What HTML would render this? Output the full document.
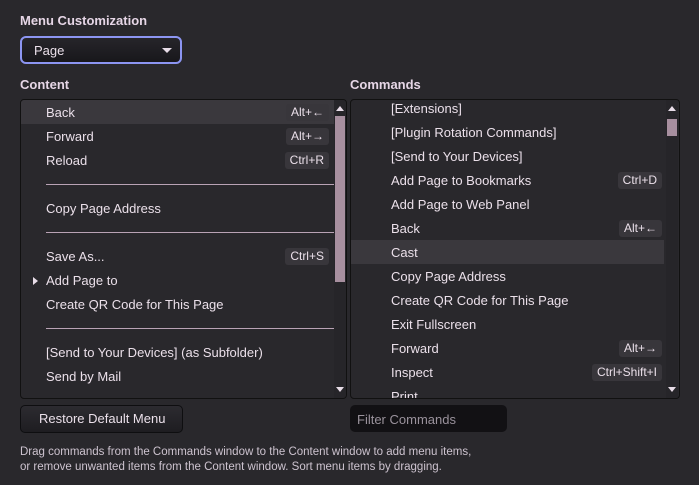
<!DOCTYPE html>
<html><head><style>
body{margin:0;width:699px;height:485px;background:#29282c;font-family:"Liberation Sans",sans-serif;color:#ebe0ea;font-size:13px;position:relative;overflow:hidden}
.a{position:absolute}
.h{font-weight:bold;font-size:13px;color:#e6d6e6}
.panel{position:absolute;border:1px solid #111;border-radius:4px;background:#29282c;overflow:hidden}
.row{position:absolute;left:0;height:24px;line-height:24px}
.row .t{position:absolute;left:25px;top:1px;white-space:nowrap}
.sc{position:absolute;right:5px;top:4px;height:17px;line-height:17px;padding:0 5px;background:#38363b;border-radius:3px;font-size:12px}
.sel{background:#3a383d}
.sep{position:absolute;left:25px;height:1px;background:#b9a3b5}
.sb{position:absolute;top:0;bottom:0;width:12px;background:#262529}
.thumb{position:absolute;left:1px;width:10px;background:#a78f9f}
.arr{position:absolute;left:2px;width:0;height:0;border-left:4px solid transparent;border-right:4px solid transparent}
.btn{position:absolute;border:1px solid #0e0e10;border-radius:5px;background:linear-gradient(#2c2b30,#1e1d21);height:26px;line-height:26px}
</style></head><body>
<div class="a h" style="left:20px;top:13px">Menu Customization</div>
<div class="a" style="left:20px;top:36px;width:158px;height:24px;border:2px solid #8c95f2;border-radius:6px;background:linear-gradient(#26252a,#18171b)">
<span class="a" style="left:12px;top:5px">Page</span>
<span class="a" style="right:8px;top:10px;border-left:5px solid transparent;border-right:5px solid transparent;border-top:5px solid #e8dde8;width:0;height:0"></span></div>
<div class="a h" style="left:20px;top:77px">Content</div>
<div class="a h" style="left:350px;top:77px">Commands</div>

<div class="panel" style="left:20px;top:99px;width:325px;height:298px">
<div class="row sel" style="top:0;width:313px"><span class="t">Back</span><span class="sc">Alt+←</span></div>
<div class="row" style="top:24px;width:313px"><span class="t">Forward</span><span class="sc">Alt+→</span></div>
<div class="row" style="top:48px;width:313px"><span class="t">Reload</span><span class="sc">Ctrl+R</span></div>
<div class="sep" style="top:84px;width:288px"></div>
<div class="row" style="top:96px;width:313px"><span class="t">Copy Page Address</span></div>
<div class="sep" style="top:132px;width:288px"></div>
<div class="row" style="top:144px;width:313px"><span class="t">Save As...</span><span class="sc">Ctrl+S</span></div>
<div class="row" style="top:168px;width:313px"><span class="a" style="left:12px;top:9px;border-top:4px solid transparent;border-bottom:4px solid transparent;border-left:5px solid #e8dde8;width:0;height:0"></span><span class="t">Add Page to</span></div>
<div class="row" style="top:192px;width:313px"><span class="t">Create QR Code for This Page</span></div>
<div class="sep" style="top:228px;width:288px"></div>
<div class="row" style="top:240px;width:313px"><span class="t">[Send to Your Devices] (as Subfolder)</span></div>
<div class="row" style="top:264px;width:313px"><span class="t">Send by Mail</span></div>
<div class="sb" style="left:313px"><span class="arr" style="top:6px;border-bottom:5px solid #e8dde8"></span><div class="thumb" style="top:16px;height:166px"></div><span class="arr" style="bottom:6px;border-top:5px solid #e8dde8"></span></div>
</div>

<div class="panel" style="left:350px;top:99px;width:328px;height:298px">
<div class="row" style="top:-4px;width:316px"><span class="t" style="left:40px">[Extensions]</span></div>
<div class="row" style="top:20px;width:316px"><span class="t" style="left:40px">[Plugin Rotation Commands]</span></div>
<div class="row" style="top:44px;width:316px"><span class="t" style="left:40px">[Send to Your Devices]</span></div>
<div class="row" style="top:68px;width:316px"><span class="t" style="left:40px">Add Page to Bookmarks</span><span class="sc">Ctrl+D</span></div>
<div class="row" style="top:92px;width:316px"><span class="t" style="left:40px">Add Page to Web Panel</span></div>
<div class="row" style="top:116px;width:316px"><span class="t" style="left:40px">Back</span><span class="sc">Alt+←</span></div>
<div class="row sel" style="top:140px;width:313px"><span class="t" style="left:40px">Cast</span></div>
<div class="row" style="top:164px;width:316px"><span class="t" style="left:40px">Copy Page Address</span></div>
<div class="row" style="top:188px;width:316px"><span class="t" style="left:40px">Create QR Code for This Page</span></div>
<div class="row" style="top:212px;width:316px"><span class="t" style="left:40px">Exit Fullscreen</span></div>
<div class="row" style="top:236px;width:316px"><span class="t" style="left:40px">Forward</span><span class="sc">Alt+→</span></div>
<div class="row" style="top:260px;width:316px"><span class="t" style="left:40px">Inspect</span><span class="sc">Ctrl+Shift+I</span></div>
<div class="row" style="top:284px;width:316px"><span class="t" style="left:40px">Print</span></div>
<div class="sb" style="left:315px"><span class="arr" style="top:6px;border-bottom:5px solid #e8dde8"></span><div class="thumb" style="top:19px;height:17px"></div><span class="arr" style="bottom:6px;border-top:5px solid #e8dde8"></span></div>
</div>

<div class="btn" style="left:20px;top:405px;width:161px"><span class="a" style="left:18px;top:0">Restore Default Menu</span></div>
<div class="a" style="left:350px;top:405px;width:157px;height:27px;background:#121114;border-radius:5px"><span class="a" style="left:7px;top:7px;color:#9a929c">Filter Commands</span></div>
<div class="a" style="left:20px;top:445px;font-size:11.5px;line-height:15px;color:#cdc3cf">Drag commands from the Commands window to the Content window to add menu items,<br>or remove unwanted items from the Content window. Sort menu items by dragging.</div>
</body></html>
